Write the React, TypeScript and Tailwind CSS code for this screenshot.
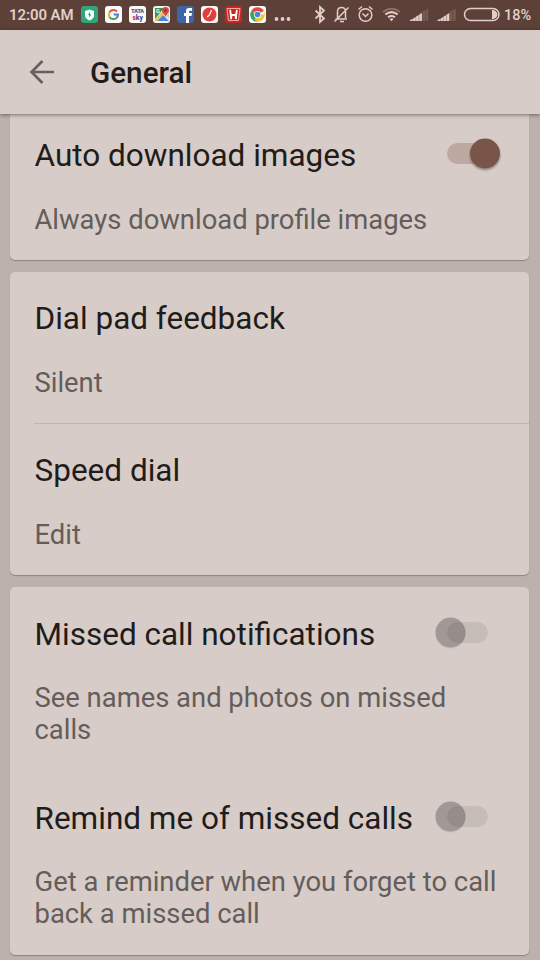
import type { ReactNode } from 'react';

type RowProps = { title: string; lines: string[]; on?: boolean; className?: string; gap?: string };

function Toggle({ on }: { on: boolean }) {
  return (
    <svg className="-mt-px mr-6 h-10 w-[76px] shrink-0" viewBox="0 0 76 40" role="img" aria-label={on ? 'On' : 'Off'}>
      <defs>
        <filter id="thumbShadow" x="-30%" y="-30%" width="160%" height="170%">
          <feDropShadow dx="0" dy="1.5" stdDeviation="1.2" floodColor="#000" floodOpacity="0.4" />
        </filter>
      </defs>
      {on ? (
        <>
          <rect x="18" y="8" width="42" height="21" rx="10.5" fill="#bda9a2" />
          <circle cx="56" cy="18.5" r="15" fill="#795548" filter="url(#thumbShadow)" />
        </>
      ) : (
        <>
          <circle cx="21.5" cy="19.5" r="15" fill="#bbb1ad" opacity=".7" />
          <circle cx="21.5" cy="18.5" r="15" fill="#a19995" />
          <rect x="18" y="8" width="41" height="21" rx="10.5" fill="#000" opacity=".08" />
        </>
      )}
    </svg>
  );
}

function Row({ title, lines, on, className = '', gap = 'mt-7' }: RowProps) {
  return (
    <section className={className}>
      <div className="flex h-10 items-start justify-between">
        <h2 className="whitespace-nowrap pl-[0.5px] text-[31.5px] leading-10 text-[#211c1a]">{title}</h2>
        {on !== undefined && <Toggle on={on} />}
      </div>
      <div className={'pl-[0.5px] text-[27.4px] leading-8 text-[#645d5a] ' + gap}>
        {lines.map((line) => (
          <p key={line} className="whitespace-nowrap">{line}</p>
        ))}
      </div>
    </section>
  );
}

function Card({ children, className = '' }: { children: ReactNode; className?: string }) {
  return (
    <div className={'ml-[10px] mr-[11px] rounded-[5px] bg-[#d7ccc8] pl-6 shadow-[0_1px_1px_rgba(0,0,0,0.25)] ' + className}>
      {children}
    </div>
  );
}

function AppIcons() {
  return (
    <svg className="h-[30px] w-[216px] shrink-0" viewBox="78 0 216 30" fontFamily="Roboto, sans-serif">
      <rect x="81" y="6" width="17" height="17" rx="3" fill="#2fa579" />
      <path d="M89.5 9.5 94 11v4.5q0 3-4.5 5-4.5-2-4.500-5V11Z" fill="#f3fffa" />
      <path d="M90 12v2.500h1.500L89 17.500V15h-1.200Z" fill="#2fa579" />
      <rect x="105" y="6" width="17" height="17" rx="3" fill="#fbf8f7" />
      <g fill="none" strokeWidth="2">
        <path d="M117 11.500A4.600 4.600 0 0 0 109.500 12.300" stroke="#e34f43" />
        <path d="M109.500 12.300a4.600 4.600 0 0 0 0 4.600" stroke="#efb72e" />
        <path d="M109.500 16.900a4.600 4.600 0 0 0 7 1" stroke="#43a45b" />
        <path d="M116.500 17.900a4.500 4.500 0 0 0 1.500-3.300h-4.300" stroke="#497fd4" />
      </g>
      <rect x="129" y="6" width="17" height="17" rx="3" fill="#fbf8f7" />
      <text x="137.500" y="13" textAnchor="middle" fontSize="5.800" fontWeight="900" textLength="13" fill="#30679c">TATA</text>
      <text x="132.500" y="20" fontSize="6.500" fontWeight="900" fill="#c9364a">s<tspan fill="#504b98">ky</tspan></text>
      <rect x="153" y="6" width="17" height="17" rx="3" fill="#f3f1ec" />
      <path d="M155 8h9l-9 11Z" fill="#329456" />
      <path d="m157 21 6-6 6 6Z" fill="#4b85d1" />
      <path d="m155 19 8.500-8.500 2 2-8.500 8.500h-2Z" fill="#eac356" />
      <path d="m165 15 4 4v-7Z" fill="#c9c9c6" />
      <text x="156" y="13" fontSize="5.500" fontWeight="700" fill="#fff">G</text>
      <path d="M165.500 7a3.500 3.500 0 0 1 3.500 3.500c0 3-3 3.500-3.500 7-.5-3.500-3.500-4-3.500-7A3.500 3.500 0 0 1 165.500 7Z" fill="#d9473e" />
      <circle cx="165.500" cy="10.500" r="1.200" fill="#812c28" />
      <rect x="177" y="6" width="17" height="17" rx="3" fill="#3d65a8" />
      <path d="M186 23v-7h-2v-3h2v-2q0-3 3-3h3v2.800h-2q-1 0-1 1V13h3l-.5 3H189v7Z" fill="#fff" />
      <rect x="201" y="6" width="17" height="17" rx="3" fill="#fbf8f7" />
      <circle cx="209.500" cy="14.500" r="7" fill="#df3f3e" />
      <path d="m211.500 10-2 5-2.300 2" stroke="#fff" strokeWidth="1.200" fill="none" />
      <rect x="225" y="6" width="17" height="17" rx="3" fill="#cb251f" />
      <path d="M227 8.500h13l-1.500 12h-10Z" fill="none" stroke="#f3bab5" strokeWidth=".9" />
      <path d="M229.300 9.700h1.700l.7 4.200h3.600l.7-4.200h1.700l-1 9.600H235l-.3-3.400h-2.400l-.3 3.400h-1.700Z" fill="#fff" />
      <rect x="249" y="6" width="17" height="17" rx="3" fill="#fbf8f7" />
      <path d="M257.500 14.500 251.200 10.900a7.200 7.200 0 0 1 12.600 0Z" fill="#df4b3c" />
      <path d="M257.500 14.500 251.200 10.900a7.200 7.200 0 0 0 6.300 10.800Z" fill="#3ca45a" />
      <path d="M257.500 14.500h6.300v-3.600a7.200 7.200 0 0 1-6.300 10.800l-3-2Z" fill="#edc83e" />
      <circle cx="257.500" cy="14.500" r="3.600" fill="#fff" />
      <circle cx="257.500" cy="14.500" r="2.800" fill="#4a83d4" />
      <g fill="#dfcec8"><circle cx="276.500" cy="19" r="1.900" /><circle cx="282.500" cy="19" r="1.900" /><circle cx="288.500" cy="19" r="1.900" /></g>
    </svg>
  );
}

function SystemIcons() {
  return (
    <svg className="h-[30px] w-[190px] shrink-0" viewBox="312 0 190 30" fill="none" stroke="#e0cfc9" strokeWidth="1.500">
      <path d="m315.500 10.500 8.500 8-4 3.500V7l4 3.500-8.500 8" strokeWidth="1.800" />
      <path d="M335.500 19h11.500M337.500 18v-6.500q0-4 4-4t4 4V18M340 21.500h4M334.500 21.500 348.500 7.500" />
      <circle cx="365.500" cy="15" r="6.300" />
      <path d="m362.500 13.500 3 3 3-3M358.500 9.500l3.500-3M369 6.500l3.500 3" />
      <path d="M383 12q8.500-6.500 17 0" stroke="#8b716a" strokeWidth="2" />
      <path d="M385.300 14.500q6.200-4.800 12.400 0M388 17.300q3.500-2.500 7 0" strokeWidth="2" />
      <path d="m389.500 19 2 2.300 2-2.300q-2-1.500-4 0" fill="#e0cfc9" stroke="none" />
      {[410, 437.500].map((x) => (
        <g key={x} stroke="none" fill="#e0cfc9">
          <path d={`M${x} 21v-1l2.800-1.200V21ZM${x + 3.100} 21v-2.500l2.700-1.500V21ZM${x + 6.100} 21v-4.500l2.700-1.500V21ZM${x + 9.200} 21v-6.500l2.700-1.500V21Z`} />
          <path d={`M${x + 12.300} 21v-9.500l2.700-1.200V21ZM${x + 15.500} 21V10l2.700-1.500V21Z`} fill="#76594f" />
        </g>
      ))}
      <rect x="464.500" y="8.500" width="34.500" height="12" rx="6" />
      <path d="M492 10h1.500q3.500 1 4 4.500-.5 3.500-4 4.500H492Z" fill="#e0cfc9" stroke="none" />
    </svg>
  );
}

export default function App() {
  return (
    <main className="flex h-[960px] w-[540px] flex-col overflow-hidden bg-[#bcb1ad] font-[Roboto,sans-serif]">
      <div className="flex h-[30px] shrink-0 items-center bg-[#5d4037] text-[#e0cfc9]">
        <span className="ml-[9px] w-[69px] shrink-0 whitespace-nowrap text-[15px] font-semibold leading-[30px] tracking-[-0.1px]">12:00 AM</span>
        <AppIcons />
        <span className="w-[18px] shrink-0" />
        <SystemIcons />
        <span className="ml-[2px] whitespace-nowrap pt-px text-[14.5px] font-medium leading-[30px]">18%</span>
      </div>
      <header className="z-10 flex h-[84px] shrink-0 items-center bg-[#d7ccc8] shadow-[0_1px_4px_rgba(0,0,0,0.45)]">
        <svg className="ml-[29px] h-6 w-[26px]" viewBox="0 0 26 24" fill="none" stroke="#685f5c" strokeWidth="2.600">
          <path d="M25 12H3M13.500 1 2.500 12l11 11" />
        </svg>
        <h1 className="ml-[35px] pt-[2px] text-[29.7px] font-medium leading-10 text-[#211c1a]">General</h1>
      </header>
      <Card className="h-[146px] shrink-0 rounded-t-none pt-[22px]">
        <Row title="Auto download images" lines={['Always download profile images']} on={true} />
      </Card>
      <Card className="mt-3 h-[303px] shrink-0">
        <Row title="Dial pad feedback" lines={['Silent']} className="h-[152px] border-b border-[#c1b5b1] pt-[27px]" />
        <Row title="Speed dial" lines={['Edit']} className="pt-[27px]" />
      </Card>
      <Card className="mt-3 h-[368px] shrink-0">
        <Row title="Missed call notifications" lines={['See names and photos on missed', 'calls']} on={false} gap="mt-[27px]" className="h-[184px] pt-7" />
        <Row title="Remind me of missed calls" lines={['Get a reminder when you forget to call', 'back a missed call']} on={false} gap="mt-[27px]" className="pt-7" />
      </Card>
    </main>
  );
}
